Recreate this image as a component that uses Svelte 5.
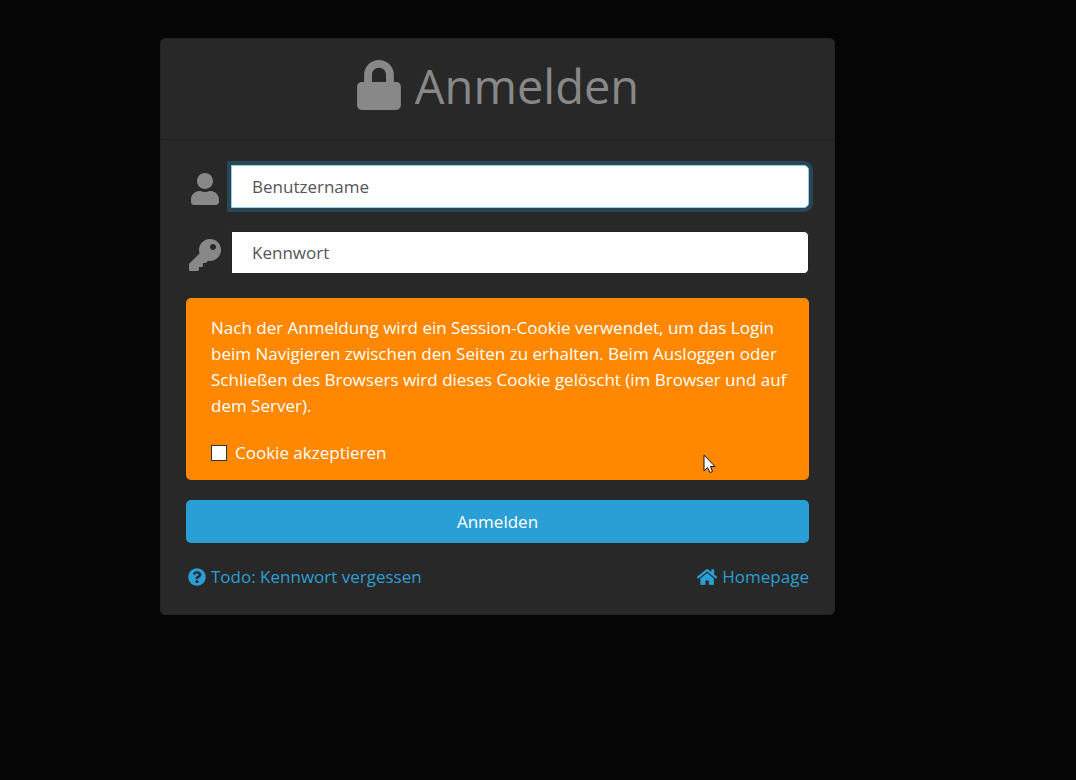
<script>
  let username = "";
  let password = "";
  let acceptCookie = false;
  // the user name field is the active one when the page opens
  let active = "username";
</script>

<style>
  :global(body) {
    margin: 0;
    background: #050505;
  }

  .page {
    display: grid;
    grid-template-columns: 160fr 675fr 241fr;
    padding: 38px 0;
    color: #888;
    font-family: "Segoe UI", "Open Sans", "Noto Sans", sans-serif;
    font-size: 17px;
    line-height: 26px;
  }

  svg {
    display: block;
    fill: currentColor;
  }

  .card {
    grid-column: 2;
    border: 1px solid #232323;
    border-radius: 5px;
    background: #282828;
  }

  header {
    display: flex;
    justify-content: center;
    gap: 13px;
    padding: 17px 24px 23px;
    border-bottom: 1px solid #212121;
  }
  header svg {
    width: 46px;
    height: 50px;
    margin-top: 4px;
  }
  h1 {
    margin: 0;
    font-size: 47px;
    font-weight: 400;
    line-height: 60px;
  }

  form {
    padding: 25px 25px 24px;
  }

  .field {
    display: flex;
    align-items: center;
    margin-bottom: 23px;
  }
  .field label {
    flex: none;
    width: 38px;
    margin-right: 7px;
    padding-top: 5px;
  }
  .field svg {
    height: 32px;
    margin: 0 auto;
  }
  .field input {
    flex: 1;
    min-width: 0;
    box-sizing: border-box;
    height: 43px;
    padding: 8px 20px;
    border: 1px solid #222;
    border-radius: 0 5px 5px 0;
    outline: none;
    background: #fff;
    color: #495057;
    font: inherit;
  }
  .field input::placeholder {
    color: #555;
    opacity: 1;
  }
  .field input.active {
    border-color: #95cfea;
    box-shadow: 0 0 0 4px #294656;
  }

  .notice {
    position: relative;
    margin-top: 24px;
    padding: 17px 16px 14px 25px;
    border-radius: 5px;
    background: #f80;
    color: #fff;
  }
  .notice p {
    margin: 0 0 21px;
  }
  .check {
    display: flex;
    align-items: center;
    gap: 8px;
  }
  .check input {
    appearance: none;
    width: 16px;
    height: 16px;
    margin: 0;
    border: 1px solid #333;
    background: #fff;
  }
  .check input:checked {
    box-shadow: inset 0 0 0 3px #fff;
    background: #333;
  }
  .pointer {
    position: absolute;
    right: 93px;
    bottom: 6px;
  }

  button {
    display: block;
    width: 100%;
    height: 43px;
    margin: 20px 0 21px;
    padding: 0;
    border: 0;
    border-radius: 5px;
    background: #2a9fd6;
    color: #fff;
    font: inherit;
  }

  nav {
    display: flex;
    justify-content: space-between;
  }
  nav a {
    display: flex;
    align-items: center;
    gap: 5px;
    color: #2a9fd6;
    text-decoration: none;
  }
  nav svg {
    height: 18px;
  }
  .help {
    margin-left: 2px;
  }
</style>

<main class="page">
  <section class="card">
    <header>
      <svg viewBox="0 0 448 512" aria-hidden="true">
        <path d="M400 224h-24v-72C376 68.2 307.8 0 224 0S72 68.2 72 152v72H48c-26.5 0-48 21.5-48 48v192c0 26.5 21.5 48 48 48h352c26.5 0 48-21.5 48-48V272c0-26.5-21.5-48-48-48zm-104 0H152v-72c0-39.7 32.3-72 72-72s72 32.3 72 72v72z" />
      </svg>
      <h1>Anmelden</h1>
    </header>

    <form on:submit|preventDefault>
      <div class="field">
        <label for="username" aria-label="Benutzername">
          <svg viewBox="0 0 448 512">
            <path d="M224 256c70.7 0 128-57.3 128-128S294.7 0 224 0 96 57.3 96 128s57.3 128 128 128zm89.6 32h-16.7c-22.2 10.2-46.9 16-72.9 16s-50.6-5.8-72.9-16h-16.7C60.2 288 0 348.2 0 422.4V464c0 26.5 21.5 48 48 48h352c26.5 0 48-21.5 48-48v-41.6c0-74.2-60.2-134.4-134.4-134.4z" />
          </svg>
        </label>
        <input
          id="username"
          type="text"
          placeholder="Benutzername"
          class:active={active === "username"}
          on:focus={() => (active = "username")}
          bind:value={username} />
      </div>
      <div class="field">
        <label for="password" aria-label="Kennwort">
          <svg viewBox="0 0 512 512">
            <path d="M512 176.001C512 273.203 433.202 352 336 352c-11.22 0-22.19-1.062-32.827-3.069l-24.012 27.014A23.999 23.999 0 0 1 261.223 384H224v40c0 13.255-10.745 24-24 24h-40v40c0 13.255-10.745 24-24 24H24c-13.255 0-24-10.745-24-24v-78.059c0-6.365 2.529-12.47 7.029-16.971l161.802-161.802C163.108 213.814 160 195.271 160 176 160 78.798 238.797.001 335.999 0 433.488-.001 512 78.511 512 176.001zM336 128c0 26.51 21.49 48 48 48s48-21.49 48-48-21.49-48-48-48-48 21.49-48 48z" />
          </svg>
        </label>
        <input
          id="password"
          type="password"
          placeholder="Kennwort"
          class:active={active === "password"}
          on:focus={() => (active = "password")}
          bind:value={password} />
      </div>

      <div class="notice">
        <p>
          Nach der Anmeldung wird ein Session-Cookie verwendet, um das Login
          beim Navigieren zwischen den Seiten zu erhalten. Beim Ausloggen oder
          Schließen des Browsers wird dieses Cookie gelöscht (im Browser und auf
          dem Server).
        </p>
        <label class="check">
          <input type="checkbox" bind:checked={acceptCookie} />
          Cookie akzeptieren
        </label>
        <svg class="pointer" width="13" height="20" viewBox="0 0 13 20" aria-hidden="true">
          <path
            d="M1 1V17L4.500 13.500L7 18.500L9.500 17.500L7.500 12.500H12Z"
            fill="#fff"
            stroke="#111"
            stroke-width="1" />
        </svg>
      </div>

      <button type="submit">Anmelden</button>

      <nav>
        <a class="help" href="#forgot">
          <svg viewBox="0 0 512 512" aria-hidden="true">
            <path d="M504 256c0 136.997-111.043 248-248 248S8 392.997 8 256C8 119.083 119.043 8 256 8s248 111.083 248 248zM262.655 90c-54.497 0-89.255 22.957-116.549 63.758-3.536 5.286-2.353 12.415 2.715 16.258l34.699 26.31c5.205 3.947 12.621 3.008 16.665-2.122 17.864-22.658 30.113-35.797 57.303-35.797 20.429 0 45.698 13.148 45.698 32.958 0 14.976-12.363 22.667-32.534 33.976C247.128 238.528 216 254.941 216 296v4c0 6.627 5.373 12 12 12h56c6.627 0 12-5.373 12-12v-1.333c0-28.462 83.186-29.647 83.186-106.667 0-58.002-60.165-102-116.531-102zM256 338c-25.365 0-46 20.635-46 46 0 25.364 20.635 46 46 46s46-20.636 46-46c0-25.364-20.635-46-46-46z" />
          </svg>
          Todo: Kennwort vergessen
        </a>
        <a href="#home">
          <svg viewBox="0 0 576 512" aria-hidden="true">
            <path d="M280.37 148.26L96 300.11V464a16 16 0 0 0 16 16l112.06-.29a16 16 0 0 0 15.92-16V368a16 16 0 0 1 16-16h64a16 16 0 0 1 16 16v95.64a16 16 0 0 0 16 16.05L464 480a16 16 0 0 0 16-16V300L295.67 148.26a12.19 12.19 0 0 0-15.3 0zM571.6 251.47L488 182.56V44.05a12 12 0 0 0-12-12h-56a12 12 0 0 0-12 12v72.61L318.47 43a48 48 0 0 0-61 0L4.34 251.47a12 12 0 0 0-1.6 16.9l25.5 31A12 12 0 0 0 45.15 301l235.22-193.74a12.19 12.19 0 0 1 15.3 0L530.9 301a12 12 0 0 0 16.9-1.6l25.5-31a12 12 0 0 0-1.7-16.93z" />
          </svg>
          Homepage
        </a>
      </nav>
    </form>
  </section>
</main>
